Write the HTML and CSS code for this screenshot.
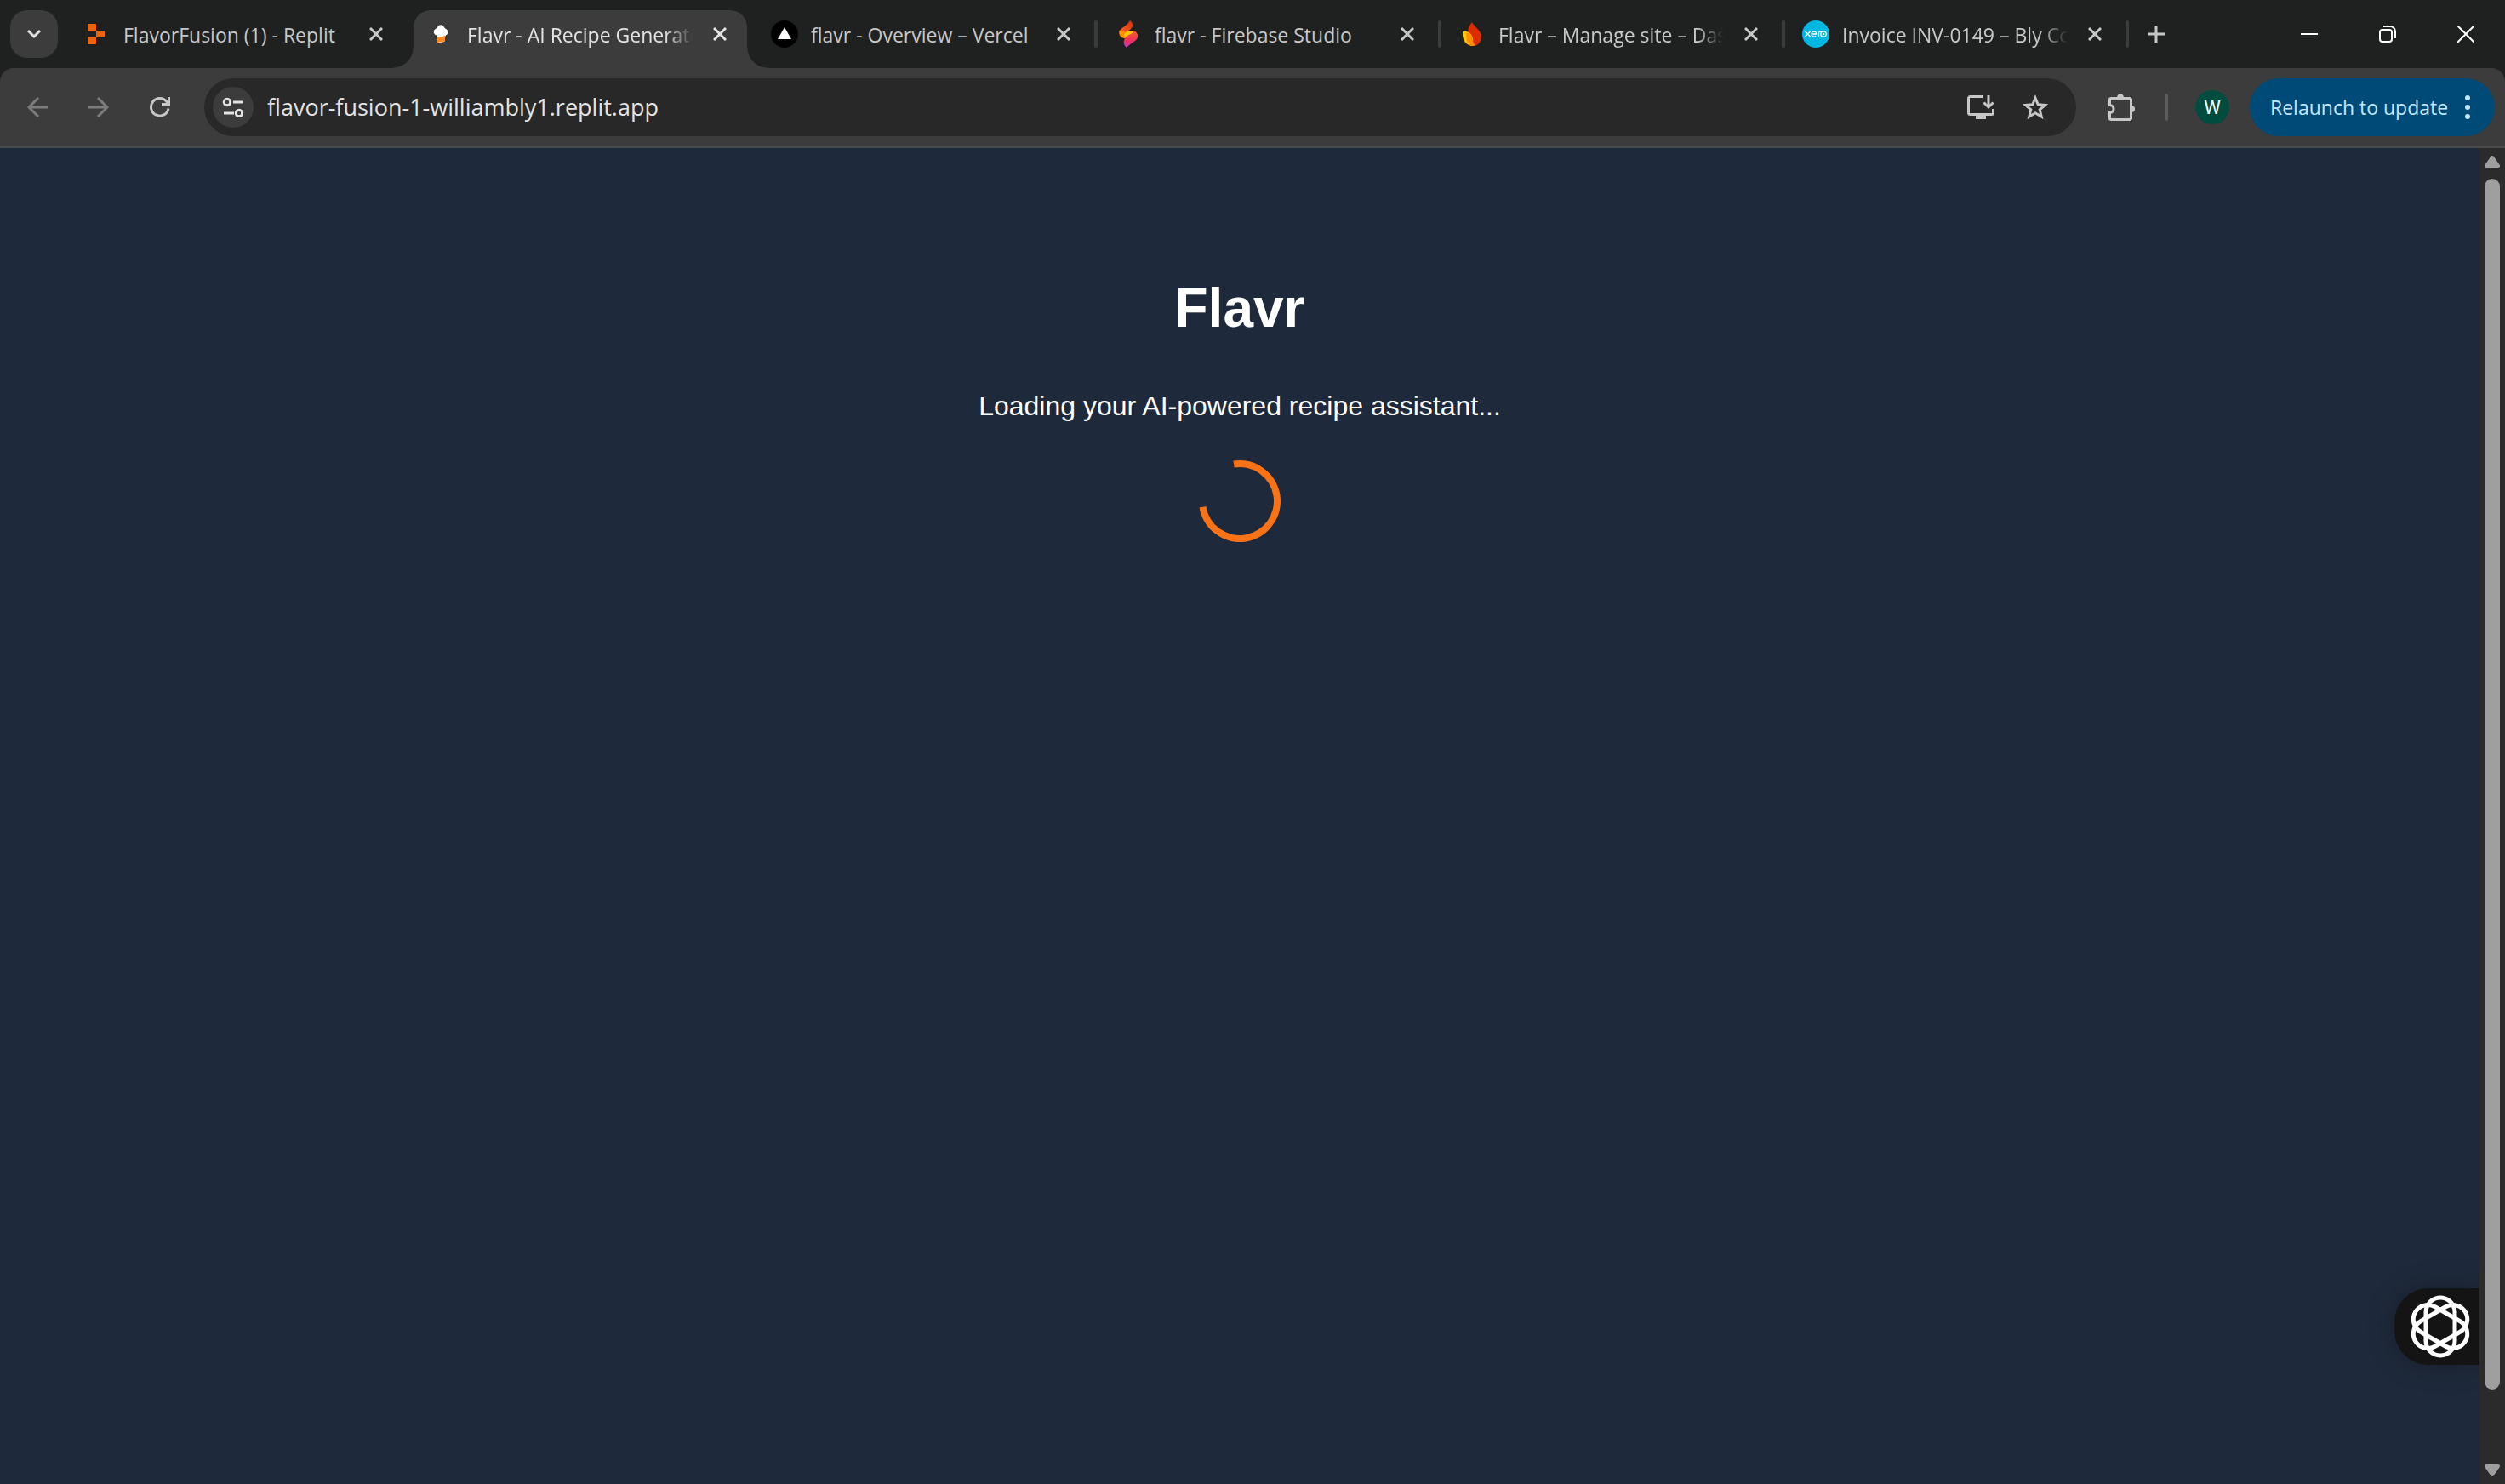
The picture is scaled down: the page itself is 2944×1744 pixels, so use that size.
FILE: index.html
```html
<!DOCTYPE html>
<html lang="en">
<head>
<meta charset="utf-8">
<title>Flavr - AI Recipe Generator</title>
<link rel="stylesheet" href="styles.css">
</head>
<body>
<div class="browser">
  <header class="tabstrip">
    <button class="tab-search" aria-label="Search tabs"><svg width="18" height="12" viewBox="0 0 18 12"><path d="M2 2l7 7 7-7" fill="none" stroke="#e3e3e3" stroke-width="3"/></svg></button>
    <nav class="tabs">
      <div class="tab">
        <svg class="favicon" viewBox="0 0 32 32"><path d="M6 4h8a1 1 0 0 1 1 1v7H6a1 1 0 0 1-1-1V5a1 1 0 0 1 1-1zM15 12h9a1 1 0 0 1 1 1v6a1 1 0 0 1-1 1h-9zM6 20h9v7a1 1 0 0 1-1 1H6a1 1 0 0 1-1-1v-6a1 1 0 0 1 1-1z" fill="#f26207"/></svg>
        <span class="title">FlavorFusion (1) - Replit</span>
        <button class="close" aria-label="Close tab"><svg width="16" height="16" viewBox="0 0 16 16"><path d="M1 1l14 14M15 1L1 15"/></svg></button>
      </div>
      <div class="tab active">
        <svg class="favicon" viewBox="0 0 32 32"><path d="M11 18c-4-1-5-6-2-8 2-1 3-2 3-3 2-3 6-3 8 0 0 1 1 2 3 3 3 2 2 7-1 8l-1 7c-3 2-6 0-9 3z" fill="#fff" stroke="#2b2b35" stroke-width="1"/><path d="M12 20c3-1 5 0 9-2v6c-3 2-6 0-9 3z" fill="#ff8a1f"/></svg>
        <span class="title fade">Flavr - AI Recipe Generator</span>
        <button class="close" aria-label="Close tab"><svg width="16" height="16" viewBox="0 0 16 16"><path d="M1 1l14 14M15 1L1 15"/></svg></button>
      </div>
      <div class="tab">
        <svg class="favicon" viewBox="0 0 32 32"><circle cx="16" cy="16" r="16" fill="#000"/><path d="M16 8l8 14H8z" fill="#fff"/></svg>
        <span class="title">flavr - Overview – Vercel</span>
        <button class="close" aria-label="Close tab"><svg width="16" height="16" viewBox="0 0 16 16"><path d="M1 1l14 14M15 1L1 15"/></svg></button>
      </div>
      <div class="tab divided">
        <svg class="favicon" viewBox="0 0 32 32"><defs><linearGradient id="fs" x1="0" y1="0" x2="0" y2="1"><stop offset="0" stop-color="#f8602a"/><stop offset=".6" stop-color="#ee2f5c"/><stop offset="1" stop-color="#c43ad0"/></linearGradient><linearGradient id="fr" x1="1" y1="0" x2="0" y2="1"><stop offset="0" stop-color="#dd2c00"/><stop offset="1" stop-color="#f9672c"/></linearGradient></defs><path d="M18 0c5 4 4 9-3 13-3 2-6 2-9 1 0-6 9-7 12-14z" fill="url(#fr)"/><path d="M6 11c3 4 9 2 16 1-2 4-6 10-11 9-5-1-7-6-5-10z" fill="#ff9100"/><path d="M15 13c3-1 6-1 8-1-1 5-7 5-12 9-1-4 1-7 4-8z" fill="#ffc400"/><path d="M23 12c6 4 5 9 1 12-4 3-8 5-10 8-5-4-4-11 1-14 3-2 6-2 8-6z" fill="url(#fs)"/></svg>
        <span class="title">flavr - Firebase Studio</span>
        <button class="close" aria-label="Close tab"><svg width="16" height="16" viewBox="0 0 16 16"><path d="M1 1l14 14M15 1L1 15"/></svg></button>
      </div>
      <div class="tab divided">
        <svg class="favicon" viewBox="0 0 32 32"><path d="M16 2c2 5 11 10 11 17 0 6-4 11-10 11-5 0-8-5-7-10 1-7 1-12 6-18z" fill="#dd2c00"/><path d="M5 13c7-1 12 4 12 10 0 3-1 6-1 7C8 29 4 22 5 13z" fill="#ffc400"/><path d="M10 14c5 2 7 6 7 9 0 3 1 4 3 6q-2 1-4 1c-6-2-8-9-6-16z" fill="#ff9100"/></svg>
        <span class="title fade">Flavr – Manage site – Dashboard</span>
        <button class="close" aria-label="Close tab"><svg width="16" height="16" viewBox="0 0 16 16"><path d="M1 1l14 14M15 1L1 15"/></svg></button>
      </div>
      <div class="tab divided last">
        <svg class="favicon" viewBox="0 0 32 32"><circle cx="16" cy="16" r="16" fill="#00b7e2"/><g fill="none" stroke="#fff" stroke-width="1.3"><path d="M3.500 13l6 6M9.500 13l-6 6M11 16h6a3 3 0 1 0-1 2.300M19.500 19v-4q0-2 2.300-2"/><circle cx="25" cy="16" r="3.200"/><circle cx="25" cy="16" r=".6"/></g></svg>
        <span class="title fade">Invoice INV-0149 – Bly Consulting</span>
        <button class="close" aria-label="Close tab"><svg width="16" height="16" viewBox="0 0 16 16"><path d="M1 1l14 14M15 1L1 15"/></svg></button>
      </div>
    </nav>
    <button class="new-tab" aria-label="New tab"><svg width="20" height="20" viewBox="0 0 20 20"><path d="M10 0v20M0 10h20" stroke="#c7c7c7" stroke-width="3"/></svg></button>
    <div class="window-controls">
      <button aria-label="Minimize"><svg width="20" height="20" viewBox="0 0 20 20"><path d="M0 10h20"/></svg></button>
      <button aria-label="Restore"><svg width="20" height="20" viewBox="0 0 20 20"><rect x="1" y="5" width="14" height="14" rx="3"/><path d="M5 1h8a6 6 0 0 1 6 6v8"/></svg></button>
      <button aria-label="Close window"><svg width="20" height="20" viewBox="0 0 20 20"><path d="M0 0l20 20M20 0L0 20"/></svg></button>
    </div>
  </header>

  <div class="toolbar">
    <button class="nav-button dim" aria-label="Back"><svg width="24" height="24" viewBox="0 0 24 24"><path d="M24 12H2M13 1L2 12l11 11"/></svg></button>
    <button class="nav-button dim" aria-label="Forward"><svg width="24" height="24" viewBox="0 0 24 24"><path d="M0 12h22M11 1l11 11-11 11"/></svg></button>
    <button class="nav-button" aria-label="Reload"><svg width="24" height="24" viewBox="0 0 24 24"><path d="M22 13.500A10.300 10.300 0 1 1 20 5.500l2 2.500M22.500 0v8.500H14"/></svg></button>
    <div class="omnibox">
      <button class="site-info" aria-label="Site information"><svg width="26" height="24" viewBox="0 0 26 24" fill="none" stroke="#e3e3e3" stroke-width="3"><circle cx="6" cy="6" r="3.700"/><path d="M13 6h12M2 19h12"/><circle cx="20" cy="19" r="3.700"/></svg></button>
      <input class="address" type="text" aria-label="Address" value="flavor-fusion-1-williambly1.replit.app">
      <button class="box-button" aria-label="Install app"><svg width="32" height="32" viewBox="0 0 32 32"><path d="M18 3.500H3.500a2 2 0 0 0-2 2v17a2 2 0 0 0 2 2h25a2 2 0 0 0 2-2V18M25 2v13M19.500 10.500L25 16l5.500-5.500" fill="none" stroke="#c7c7c7" stroke-width="3"/><path d="M10 24h12v6H10z" fill="#c7c7c7"/></svg></button>
      <button class="box-button" aria-label="Bookmark this tab"><svg width="32" height="32" viewBox="0 0 32 32"><path d="M16 5l3.200 7.800 8.300.7-6.300 5.400 2 8.300-7.200-4.400-7.200 4.400 2-8.300-6.300-5.400 8.300-.7z" fill="none" stroke="#c7c7c7" stroke-width="3"/></svg></button>
    </div>
    <button class="extensions" aria-label="Extensions"><svg width="32" height="32" viewBox="0 0 32 32"><path d="M4 5.500h21a1.500 1.500 0 0 1 1.500 1.500v22a1.500 1.500 0 0 1-1.500 1.500H3A1.500 1.500 0 0 1 1.500 29v-6.500c6 0 6-9 0-9V7A1.500 1.500 0 0 1 3 5.500z" fill="none" stroke="#c7c7c7" stroke-width="3"/><path d="M10 5a4 5 0 0 1 8 0zM27 14a4 4 0 0 1 0 8z" fill="#c7c7c7"/></svg></button>
    <span class="divider"></span>
    <button class="avatar" aria-label="Profile">W</button>
    <button class="relaunch"><span>Relaunch to update</span><svg width="6" height="28" viewBox="0 0 6 28" fill="#c2e7ff"><circle cx="3" cy="3" r="3"/><circle cx="3" cy="14" r="3"/><circle cx="3" cy="25" r="3"/></svg></button>
  </div>

  <div class="viewport">
    <main class="page">
      <h1>Flavr</h1>
      <p>Loading your AI-powered recipe assistant...</p>
      <div class="spinner" role="status" aria-label="Loading"></div>
      <button class="assistant" aria-label="Open assistant"><svg width="76" height="76" viewBox="-38 -38 76 76" fill="none" stroke="#fff" stroke-width="5"><rect x="-17" y="-34" width="34" height="68" rx="17"/><rect x="-17" y="-34" width="34" height="68" rx="17" transform="rotate(60)"/><rect x="-17" y="-34" width="34" height="68" rx="17" transform="rotate(120)"/></svg></button>
    </main>
    <div class="scrollbar">
      <svg width="18" height="14" viewBox="0 0 18 14"><path d="M9 2l7 10H2z"/></svg>
      <div class="track"><div class="thumb"></div></div>
      <svg width="18" height="14" viewBox="0 0 18 14"><path d="M2 2h14L9 12z"/></svg>
    </div>
  </div>
</div>
</body>
</html>
```
FILE: styles.css
```css
* { box-sizing: border-box; }

body {
  margin: 0;
  font-family: "Open Sans", "Noto Sans", sans-serif;
  color: #c7c7c7;
  background: #1f2120;
}

button {
  margin: 0;
  padding: 0;
  border: 0;
  background: none;
  color: inherit;
  font: inherit;
  display: flex;
  align-items: center;
  justify-content: center;
  flex: none;
}

svg { display: block; flex: none; }

.browser {
  display: flex;
  flex-direction: column;
  min-height: 100vh;
}

/* Tab strip */
.tabstrip {
  display: flex;
  align-items: center;
  height: 80px;
  padding-left: 12px;
}

.tab-search {
  width: 56px;
  height: 56px;
  margin-right: 8px;
  border-radius: 20px;
  background: #3c3c3c;
}

.tabs {
  display: flex;
  flex: 0 1 2424px;
  min-width: 0;
  height: 80px;
}

.tab {
  position: relative;
  display: flex;
  align-items: center;
  flex: 1 1 0;
  min-width: 0;
  padding: 0 30px 0 22px;
}

.tab.active { color: #e3e3e3; }

.tab.active::before {
  content: "";
  position: absolute;
  z-index: 0;
  inset: 12px 6px 0;
  border-radius: 20px 20px 0 0;
  background: #3c3c3c;
}

.tab.active::after {
  content: "";
  position: absolute;
  left: -18px;
  right: -18px;
  bottom: 0;
  height: 24px;
  background:
    radial-gradient(circle at 0 0, transparent 23px, #3c3c3c 24px) left / 24px 24px no-repeat,
    radial-gradient(circle at 100% 0, transparent 23px, #3c3c3c 24px) right / 24px 24px no-repeat;
}

.tab > * { position: relative; z-index: 1; }

.divided::before,
.last::after {
  content: "";
  position: absolute;
  left: -2px;
  top: 24px;
  width: 4px;
  height: 32px;
  border-radius: 2px;
  background: #3c3c3c;
}

.last::after { left: auto; right: -2px; }

.favicon { width: 32px; height: 32px; }

.title {
  flex: 1;
  min-width: 0;
  margin-left: 15px;
  padding-top: 2px;
  overflow: hidden;
  white-space: nowrap;
  font-size: 23px;
  line-height: 32px;
}

.fade { mask-image: linear-gradient(to right, #000 calc(100% - 40px), transparent calc(100% - 8px)); }

.close { width: 16px; height: 16px; margin-left: 16px; }
.close path { fill: none; stroke: currentColor; stroke-width: 3; }

.new-tab { width: 68px; height: 56px; }

.window-controls { display: flex; margin-left: auto; }
.window-controls button { width: 92px; height: 80px; }
.window-controls svg { fill: none; stroke: #fff; stroke-width: 2; }

/* Toolbar */
.toolbar {
  display: flex;
  align-items: center;
  height: 94px;
  padding: 0 12px 0 8px;
  border-bottom: 2px solid #4a4a4a;
  border-radius: 16px 16px 0 0;
  background: #3c3c3c;
}

.nav-button { width: 72px; height: 68px; }
.nav-button path { fill: none; stroke: #c7c7c7; stroke-width: 3; }
.dim path { stroke: #7c7c7c; }

.omnibox {
  display: flex;
  align-items: center;
  flex: 1;
  height: 68px;
  margin-left: 16px;
  padding: 0 16px 0 10px;
  border-radius: 34px;
  background: #282828;
}

.site-info {
  width: 48px;
  height: 48px;
  border-radius: 50%;
  background: #3c3c3c;
}

.address {
  flex: 1;
  min-width: 0;
  margin-left: 16px;
  padding: 0;
  border: 0;
  outline: 0;
  background: none;
  color: #e3e3e3;
  font: inherit;
  font-size: 27px;
  line-height: 40px;
}

.box-button { width: 64px; height: 48px; }

.extensions { width: 32px; height: 48px; margin-left: 38px; }

.divider {
  width: 4px;
  height: 32px;
  margin: 0 32px 0 34px;
  border-radius: 2px;
  background: #5c5c5c;
}

.avatar {
  width: 40px;
  height: 40px;
  border-radius: 50%;
  background: #004d40;
  color: #fff;
  font-family: Roboto, sans-serif;
  font-size: 22px;
}

.relaunch {
  width: 288px;
  height: 68px;
  margin-left: 24px;
  padding: 0 29px 0 24px;
  justify-content: space-between;
  border-radius: 34px;
  background: #004a77;
  color: #c2e7ff;
  font-size: 23px;
  white-space: nowrap;
}

/* Page */
.viewport { display: flex; flex: 1; }

.page {
  position: relative;
  flex: 1;
  overflow: hidden;
  padding-top: 151px;
  background: #1e293b;
  color: #fff;
  font-family: "Liberation Sans", Arial, sans-serif;
  text-align: center;
}

h1 { margin: 0; font-size: 64px; line-height: 74px; }

p { margin: 60px 0 0; font-size: 32px; line-height: 36px; }

.spinner {
  width: 96px;
  height: 96px;
  margin: 46px auto 0;
  border: 8px solid #f97316;
  border-top-color: transparent;
  border-radius: 50%;
  transform: rotate(-54deg);
}

.assistant {
  position: absolute;
  right: 0;
  bottom: 140px;
  width: 100px;
  height: 90px;
  padding-left: 8px;
  border-radius: 40px 0 0 40px;
  background: #141414;
  box-shadow: 0 0 32px rgba(0, 0, 0, .25);
}

.scrollbar {
  display: flex;
  flex-direction: column;
  align-items: center;
  width: 30px;
  padding: 9px 0;
  background: #2b2b2b;
}

.scrollbar path { fill: #9f9f9f; stroke: #9f9f9f; stroke-width: 4; stroke-linejoin: round; }

.track { flex: 1; margin: 13px 0; }

.thumb {
  width: 18px;
  height: 95%;
  border-radius: 9px;
  background: #9f9f9f;
}
```
